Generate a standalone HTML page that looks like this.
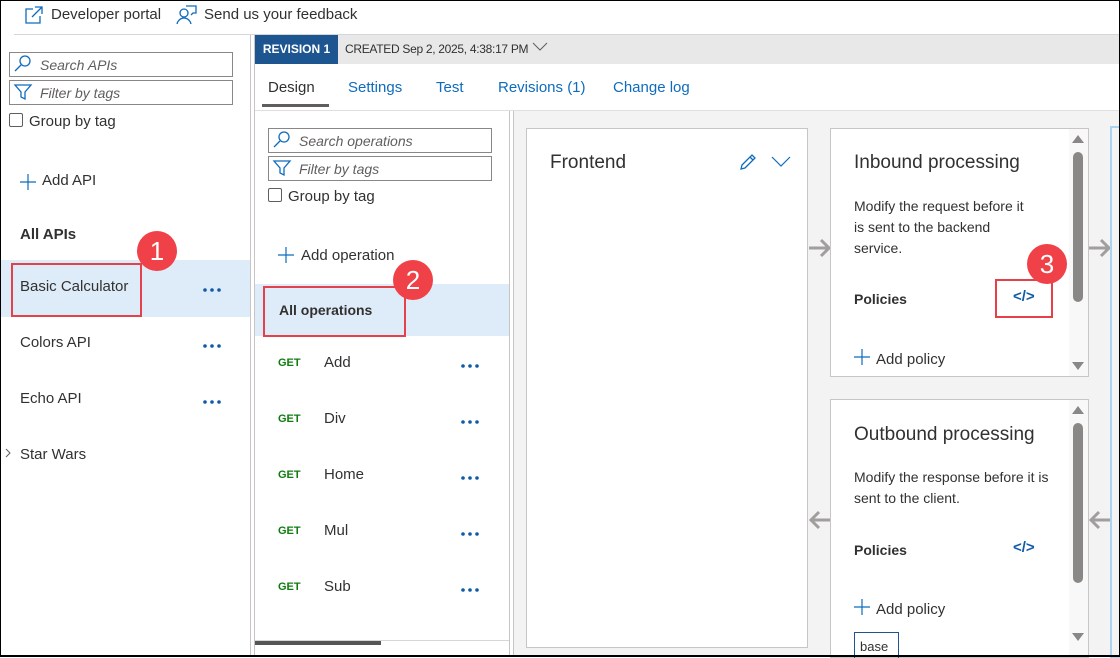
<!DOCTYPE html>
<html><head><meta charset="utf-8"><style>
*{box-sizing:border-box;margin:0;padding:0}
body{width:1120px;height:657px;overflow:hidden;font-family:"Liberation Sans",sans-serif;font-size:14px;color:#323130;background:#fff;position:relative}
.a{position:absolute}
.frame{position:absolute;left:0;top:0;width:1120px;height:657px;border:1px solid #000;border-bottom:2px solid #000;pointer-events:none;z-index:10}
.inp{position:absolute;border:1px solid #8a8886;height:25px;font-style:italic;color:#605e5c;font-size:14px;line-height:24px;padding-left:30px}
.dots{position:absolute}
.get{position:absolute;color:#107c10;font-weight:bold;font-size:11px}
.badge{position:absolute;width:40px;height:40px;border-radius:50%;background:#f04048;color:#fff;font-size:26px;text-align:center;line-height:40px;z-index:5}
.redbox{position:absolute;border:2px solid #e5414a;z-index:4}
.card{position:absolute;background:#fff;border:1px solid #c8c6c4}
.sb{position:absolute;background:#8a8886;border-radius:5px;width:10px}
.plus{position:absolute}
</style></head><body>
<div class="frame"></div>
<svg width="0" height="0" style="position:absolute"><defs>
<g id="d"><circle cx="2" cy="2" r="1.8" fill="#0f5ba7"/><circle cx="9" cy="2" r="1.8" fill="#0f5ba7"/><circle cx="16" cy="2" r="1.8" fill="#0f5ba7"/></g>
<g id="p"><path d="M8 0v16M0 8h16" stroke="#0f6cbd" stroke-width="1.2"/></g>
</defs></svg>
<!-- top bar -->
<svg class="a" style="left:24px;top:5px" width="20" height="20" viewBox="0 0 20 20" fill="none" stroke="#0f6cbd" stroke-width="1.3"><path d="M9 4H2v14h14v-7M11 2h7v7M18 2 8 12"/></svg>
<div class="a" style="left:51px;top:6px;font-size:15px">Developer portal</div>
<svg class="a" style="left:176px;top:4px" width="22" height="22" viewBox="0 0 22 22" fill="none" stroke="#0f6cbd" stroke-width="1.3"><circle cx="8" cy="9" r="4"/><path d="M1 20c1-4 4-6 7-6s6 2 7 6M10 2h10v7h-3l-2 2"/></svg>
<div class="a" style="left:204px;top:6px;font-size:15px">Send us your feedback</div>
<div class="a" style="left:14px;top:34px;width:1106px;height:1px;background:#d6d6d6"></div>
<!-- left panel -->
<div class="inp" style="left:9px;top:52px;width:224px">Search APIs</div>
<svg class="a" style="left:13px;top:54px" width="20" height="20" viewBox="0 0 20 20" fill="none" stroke="#0f6cbd" stroke-width="1.3"><circle cx="12" cy="7" r="5"/><path d="M8 11 2 17"/></svg>
<div class="inp" style="left:9px;top:80px;width:224px">Filter by tags</div>
<svg class="a" style="left:13px;top:82px" width="20" height="20" viewBox="0 0 20 20" fill="none" stroke="#0f6cbd" stroke-width="1.3"><path d="M2 3h16l-6 7v7l-4-2v-5z"/></svg>
<div class="a" style="left:9px;top:113px;width:14px;height:14px;border:1px solid #605e5c;border-radius:2px"></div>
<div class="a" style="left:29px;top:113px;font-size:15px">Group by tag</div>
<svg class="plus" style="left:20px;top:174px" width="16" height="16"><use href="#p"/></svg>
<div class="a" style="left:42px;top:172px;font-size:15px">Add API</div>
<div class="a" style="left:20px;top:226px;font-size:15px;font-weight:bold">All APIs</div>
<div class="a" style="left:0;top:260px;width:250px;height:57px;background:#deecf9"></div>
<div class="a" style="left:20px;top:278px;font-size:15px">Basic Calculator</div>
<div class="redbox" style="left:11px;top:263px;width:131px;height:54px"></div>
<div class="badge" style="left:137px;top:231px">1</div>
<svg class="dots" style="left:203px;top:288px" width="18" height="4"><use href="#d"/></svg>
<div class="a" style="left:20px;top:334px;font-size:15px">Colors API</div>
<svg class="dots" style="left:203px;top:344px" width="18" height="4"><use href="#d"/></svg>
<div class="a" style="left:20px;top:390px;font-size:15px">Echo API</div>
<svg class="dots" style="left:203px;top:400px" width="18" height="4"><use href="#d"/></svg>
<svg class="a" style="left:5px;top:448px" width="6" height="10" fill="none" stroke="#605e5c"><path d="M1 1l4 4-4 4"/></svg>
<div class="a" style="left:20px;top:446px;font-size:15px">Star Wars</div>
<!-- separator -->
<div class="a" style="left:250px;top:35px;width:1px;height:622px;background:#c8c6c4"></div>
<div class="a" style="left:254px;top:35px;width:1px;height:622px;background:#c8c6c4"></div>
<!-- revision bar -->
<div class="a" style="left:255px;top:35px;width:865px;height:29px;background:#e8e8e8"></div>
<div class="a" style="left:255px;top:35px;width:83px;height:29px;background:#1d5591;color:#fff;font-weight:bold;font-size:12px;line-height:29px;text-align:center">REVISION 1</div>
<div class="a" style="left:345px;top:42px;font-size:12px;color:#323130;letter-spacing:-0.3px">CREATED Sep 2, 2025, 4:38:17 PM</div>
<svg class="a" style="left:532px;top:42px" width="16" height="10" viewBox="0 0 16 10" fill="none" stroke="#605e5c"><path d="M1 1l7 7 7-7"/></svg>
<!-- tabs -->
<div class="a" style="left:268px;top:79px;font-size:15px">Design</div>
<div class="a" style="left:262px;top:104px;width:67px;height:3px;background:#605e5c"></div>
<div class="a" style="left:348px;top:79px;font-size:15px;color:#0f6cbd">Settings</div>
<div class="a" style="left:436px;top:79px;font-size:15px;color:#0f6cbd">Test</div>
<div class="a" style="left:498px;top:79px;font-size:15px;color:#0f6cbd">Revisions (1)</div>
<div class="a" style="left:613px;top:79px;font-size:15px;color:#0f6cbd">Change log</div>
<div class="a" style="left:255px;top:110px;width:865px;height:1px;background:#e1dfdd"></div>
<!-- operations panel -->
<div class="a" style="left:509px;top:111px;width:1px;height:546px;background:#c8c6c4"></div>
<div class="a" style="left:513px;top:111px;width:1px;height:546px;background:#c8c6c4"></div>
<div class="inp" style="left:268px;top:128px;width:224px">Search operations</div>
<svg class="a" style="left:272px;top:130px" width="20" height="20" viewBox="0 0 20 20" fill="none" stroke="#0f6cbd" stroke-width="1.3"><circle cx="12" cy="7" r="5"/><path d="M8 11 2 17"/></svg>
<div class="inp" style="left:268px;top:156px;width:224px">Filter by tags</div>
<svg class="a" style="left:272px;top:158px" width="20" height="20" viewBox="0 0 20 20" fill="none" stroke="#0f6cbd" stroke-width="1.3"><path d="M2 3h16l-6 7v7l-4-2v-5z"/></svg>
<div class="a" style="left:268px;top:188px;width:14px;height:14px;border:1px solid #605e5c;border-radius:2px"></div>
<div class="a" style="left:288px;top:188px;font-size:15px">Group by tag</div>
<svg class="plus" style="left:278px;top:247px" width="16" height="16"><use href="#p"/></svg>
<div class="a" style="left:301px;top:247px;font-size:15px">Add operation</div>
<div class="a" style="left:255px;top:284px;width:254px;height:52px;background:#deecf9"></div>
<div class="a" style="left:279px;top:302px;font-size:14px;font-weight:bold">All operations</div>
<div class="redbox" style="left:263px;top:286px;width:143px;height:51px"></div>
<div class="badge" style="left:393px;top:260px">2</div>
<div class="get" style="left:278px;top:357px">GET</div><div class="a" style="left:324px;top:354px;font-size:15px">Add</div><svg class="dots" style="left:461px;top:364px" width="18" height="4"><use href="#d"/></svg>
<div class="get" style="left:278px;top:413px">GET</div><div class="a" style="left:324px;top:410px;font-size:15px">Div</div><svg class="dots" style="left:461px;top:420px" width="18" height="4"><use href="#d"/></svg>
<div class="get" style="left:278px;top:469px">GET</div><div class="a" style="left:324px;top:466px;font-size:15px">Home</div><svg class="dots" style="left:461px;top:476px" width="18" height="4"><use href="#d"/></svg>
<div class="get" style="left:278px;top:525px">GET</div><div class="a" style="left:324px;top:522px;font-size:15px">Mul</div><svg class="dots" style="left:461px;top:532px" width="18" height="4"><use href="#d"/></svg>
<div class="get" style="left:278px;top:581px">GET</div><div class="a" style="left:324px;top:578px;font-size:15px">Sub</div><svg class="dots" style="left:461px;top:588px" width="18" height="4"><use href="#d"/></svg>
<div class="a" style="left:255px;top:640px;width:254px;height:1px;background:#d6d6d6"></div>
<div class="a" style="left:255px;top:641px;width:126px;height:4px;background:#555"></div>
<!-- canvas -->
<div class="a" style="left:514px;top:111px;width:606px;height:546px;background:#f3f3f3"></div>
<div class="card" style="left:526px;top:128px;width:282px;height:520px"></div>
<div class="a" style="left:550px;top:152px;font-size:19px">Frontend</div>
<svg class="a" style="left:738px;top:152px" width="20" height="20" viewBox="0 0 20 20" fill="none" stroke="#0f6cbd" stroke-width="1.3"><path d="M3 17l1-4L14 3l3 3L7 16zM12 5l3 3"/></svg>
<svg class="a" style="left:771px;top:156px" width="20" height="12" viewBox="0 0 20 12" fill="none" stroke="#0f6cbd" stroke-width="1.2"><path d="M1 1l9 9 9-9"/></svg>
<!-- arrows -->
<svg class="a" style="left:808px;top:238px" width="24" height="20" viewBox="0 0 24 20" fill="none" stroke="#a19f9d" stroke-width="3"><path d="M1 10h20M13 2l8 8-8 8"/></svg>
<svg class="a" style="left:1088px;top:238px" width="24" height="20" viewBox="0 0 24 20" fill="none" stroke="#a19f9d" stroke-width="3"><path d="M1 10h20M13 2l8 8-8 8"/></svg>
<svg class="a" style="left:808px;top:510px" width="24" height="20" viewBox="0 0 24 20" fill="none" stroke="#a19f9d" stroke-width="3"><path d="M23 10H3M11 2 3 10l8 8"/></svg>
<svg class="a" style="left:1088px;top:510px" width="24" height="20" viewBox="0 0 24 20" fill="none" stroke="#a19f9d" stroke-width="3"><path d="M23 10H3M11 2 3 10l8 8"/></svg>
<div class="a" style="left:1110px;top:126px;width:10px;height:532px;border:2px solid #a9d3f1;border-right:none"></div>
<!-- inbound -->
<div class="card" style="left:830px;top:128px;width:259px;height:249px"></div>
<div class="a" style="left:1069px;top:129px;width:19px;height:247px;background:#f8f8f8"></div>
<div class="sb" style="left:1073px;top:152px;height:150px"></div>
<div class="a" style="left:1072px;top:135px;width:0;height:0;border:6px solid transparent;border-bottom:8px solid #8a8886;border-top:none"></div>
<div class="a" style="left:1072px;top:362px;width:0;height:0;border:6px solid transparent;border-top:8px solid #8a8886;border-bottom:none"></div>
<div class="a" style="left:854px;top:152px;font-size:19px">Inbound processing</div>
<div class="a" style="left:854px;top:196px;font-size:14px;line-height:21px;width:175px">Modify the request before it is sent to the backend service.</div>
<div class="a" style="left:854px;top:291px;font-size:14px;font-weight:bold">Policies</div>
<div class="a" style="left:1013px;top:288px;font-size:15px;font-weight:bold;color:#0f5ba7">&lt;/&gt;</div>
<div class="redbox" style="left:995px;top:279px;width:58px;height:39px"></div>
<div class="badge" style="left:1027px;top:244px">3</div>
<svg class="plus" style="left:854px;top:349px" width="16" height="16"><use href="#p"/></svg>
<div class="a" style="left:876px;top:351px;font-size:15px">Add policy</div>
<!-- outbound -->
<div class="card" style="left:830px;top:399px;width:259px;height:259px"></div>
<div class="a" style="left:1069px;top:400px;width:19px;height:256px;background:#f8f8f8"></div>
<div class="sb" style="left:1073px;top:423px;height:160px"></div>
<div class="a" style="left:1072px;top:406px;width:0;height:0;border:6px solid transparent;border-bottom:8px solid #8a8886;border-top:none"></div>
<div class="a" style="left:1072px;top:633px;width:0;height:0;border:6px solid transparent;border-top:8px solid #8a8886;border-bottom:none"></div>
<div class="a" style="left:854px;top:424px;font-size:19px">Outbound processing</div>
<div class="a" style="left:854px;top:467px;font-size:14px;line-height:21px;width:200px">Modify the response before it is sent to the client.</div>
<div class="a" style="left:854px;top:542px;font-size:14px;font-weight:bold">Policies</div>
<div class="a" style="left:1013px;top:539px;font-size:15px;font-weight:bold;color:#0f5ba7">&lt;/&gt;</div>
<svg class="plus" style="left:854px;top:599px" width="16" height="16"><use href="#p"/></svg>
<div class="a" style="left:876px;top:601px;font-size:15px">Add policy</div>
<div class="a" style="left:854px;top:632px;width:45px;height:26px;border:1px solid #1d5591;border-bottom:none;overflow:hidden;font-size:13px;padding:6px 0 0 5px">base</div>
</body></html>
